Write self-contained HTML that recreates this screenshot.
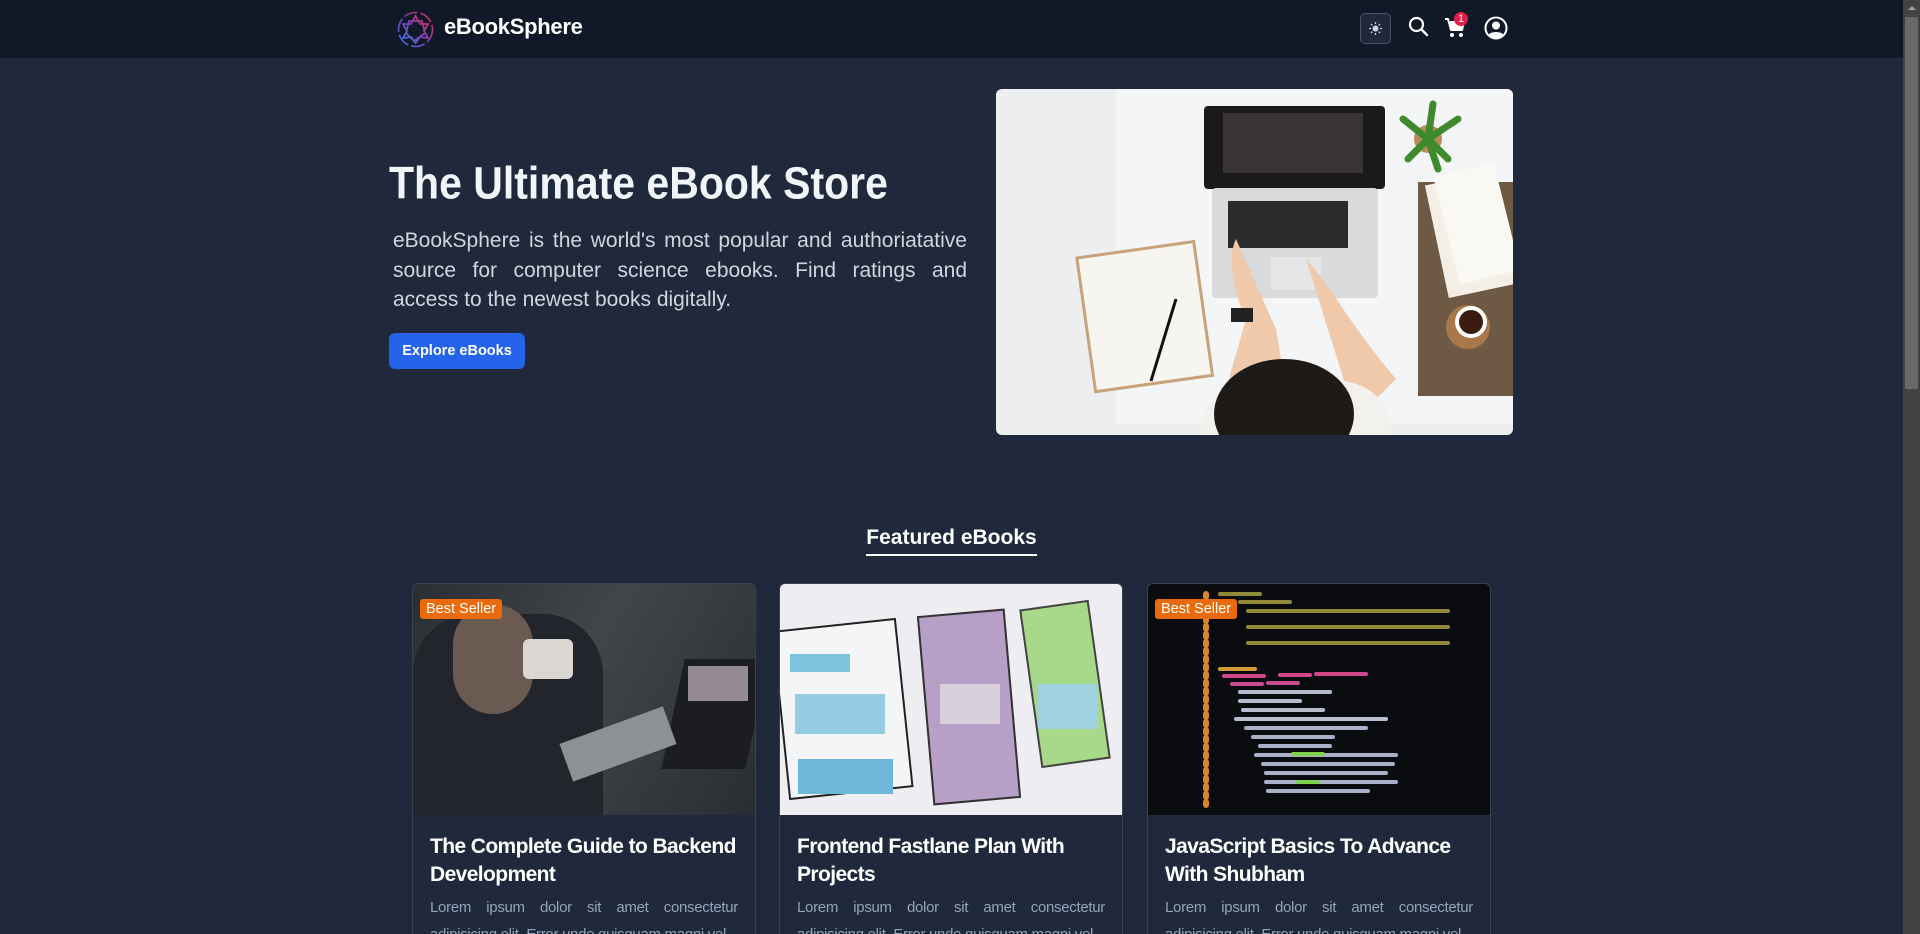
<!DOCTYPE html>
<html><head><meta charset="utf-8"><style>
*{margin:0;padding:0;box-sizing:border-box}
html,body{width:1920px;height:934px;overflow:hidden;background:#1f293b;font-family:"Liberation Sans",Arial,sans-serif;color:#f3f4f6}
.nav{position:absolute;left:0;top:0;width:1903px;height:58px;background:#111827}
.sb{position:absolute;left:1903px;top:0;width:17px;height:934px;background:#424242}
.sb div{position:absolute;left:2px;top:17px;width:13px;height:372px;background:#686868}
.sb i{position:absolute;left:5px;top:6px;border-left:4px solid transparent;border-right:4px solid transparent;border-bottom:4px solid #a0a0a0}
.abs{position:absolute}
h1{position:absolute;left:389px;top:158px;font-size:41px;font-weight:bold;color:#f1f5f9;white-space:nowrap;transform:scaleY(1.1);transform-origin:left top}
.lead{position:absolute;left:393px;top:226px;width:574px;font-size:21px;line-height:29.5px;color:#d1d5db}
.lead div{text-align:justify;text-align-last:justify;white-space:nowrap}
.lead div.last{text-align-last:left}
.btn{position:absolute;left:389px;top:333px;width:136px;height:36px;border-radius:6px;background:#2563eb;color:#fff;font-size:14.5px;font-weight:bold;text-align:center;line-height:36px}
.feat{position:absolute;left:0;width:1903px;top:526px;text-align:center;font-size:21px;font-weight:bold;color:#fff}
.feat span{display:inline-block;border-bottom:2px solid #fff;padding-bottom:4px}
.card{position:absolute;top:583px;width:344px;height:351px;border:1px solid #374151;border-bottom:none;border-radius:6px 6px 0 0;overflow:hidden;background:#1f293b}
.card .img{height:231px;position:relative;overflow:hidden}
.card h3{margin:18px 17px 0;font-size:21px;line-height:28px;color:#fff;letter-spacing:-0.6px}
.card p{margin:5px 17px 0;font-size:15px;line-height:27px;color:#94a3b8;text-align:justify;letter-spacing:-0.3px}
.badge{position:absolute;left:7px;top:15px;background:#ea6a0c;color:#fff;font-size:14.5px;padding:2px 6px;border-radius:3px}
</style></head><body>
<div class="nav">
  <svg class="abs" style="left:397px;top:11px" width="37" height="37" viewBox="0 0 37 37">
    <defs><linearGradient id="lg" x1="0" y1="1" x2="1" y2="0"><stop offset="0" stop-color="#2f7fe0"/><stop offset="0.5" stop-color="#7a3fb0"/><stop offset="1" stop-color="#e0305a"/></linearGradient></defs>
    <circle cx="18.5" cy="18.5" r="17" fill="none" stroke="url(#lg)" stroke-width="1.6" stroke-dasharray="14 3"/>
    <path d="M18.5 5 L23 13 L31 13 L27 20 L31 27 L23 26 L18.5 32 L14 26 L6 27 L10 20 L6 13 L14 13 Z M12 10 L25 10 L28 22 L17 30 L9 22 Z" fill="none" stroke="url(#lg)" stroke-width="1.8"/>
  </svg>
  <div class="abs" style="left:444px;top:14px;font-size:22px;font-weight:bold;color:#fff;letter-spacing:-0.3px">eBookSphere</div>
  <div class="abs" style="left:1360px;top:13px;width:31px;height:31px;border:1px solid #475569;border-radius:5px;background:#1f2937"></div>
  <svg class="abs" style="left:1369px;top:22px" width="13" height="13" viewBox="0 0 13 13"><circle cx="6.5" cy="6.5" r="3" fill="#cbd5e1"/><g stroke="#cbd5e1" stroke-width="1.2"><path d="M6.5 0v2M6.5 11v2M0 6.5h2M11 6.5h2M2 2l1.4 1.4M9.6 9.6L11 11M2 11l1.4-1.4M9.6 3.4L11 2"/></g></svg>
  <svg class="abs" style="left:1408px;top:16px" width="21" height="21" viewBox="0 0 21 21"><circle cx="8.5" cy="8.5" r="6.5" fill="none" stroke="#fff" stroke-width="2.2"/><path d="M13.5 13.5L19 19" stroke="#fff" stroke-width="2.4" stroke-linecap="round"/></svg>
  <svg class="abs" style="left:1444px;top:17px" width="22" height="22" viewBox="0 0 22 22"><path d="M1 2h3l3 11h11l2-8H6" fill="#fff" stroke="#fff" stroke-width="2" stroke-linejoin="round"/><rect x="6" y="5" width="13" height="8" fill="#fff"/><circle cx="8" cy="18" r="2" fill="#fff"/><circle cx="17" cy="18" r="2" fill="#fff"/></svg>
  <div class="abs" style="left:1454px;top:12px;width:14px;height:14px;border-radius:7px;background:#e11d48;color:#fff;font-size:11px;text-align:center;line-height:14px">1</div>
  <svg class="abs" style="left:1484px;top:16px" width="24" height="24" viewBox="0 0 24 24"><circle cx="12" cy="12" r="10.5" fill="none" stroke="#fff" stroke-width="2"/><circle cx="12" cy="9.5" r="4" fill="#fff"/><path d="M4.5 19c2-4 13-4 15 0c-2 2.5-5 3.5-7.5 3.5s-5.5-1-7.5-3.5z" fill="#fff"/></svg>
</div>
<div class="sb"><i></i><div></div></div>

<h1>The Ultimate eBook Store</h1>
<div class="lead"><div>eBookSphere is the world's most popular and authoriatative</div><div>source for computer science ebooks. Find ratings and</div><div class="last">access to the newest books digitally.</div></div>
<div class="btn">Explore eBooks</div>

<svg class="abs" style="left:996px;top:89px;border-radius:6px" width="517" height="346" viewBox="0 0 517 346">
  <rect width="517" height="346" fill="#eceef0"/>
  <rect x="120" y="0" width="400" height="335" fill="#f4f5f6"/>
  <rect x="422" y="93" width="95" height="214" fill="#6e5a44"/>
  <rect x="440" y="88" width="70" height="115" fill="#f3efe6" transform="rotate(-12 475 145)"/>
  <rect x="450" y="80" width="62" height="110" fill="#faf8f2" transform="rotate(-14 480 135)"/>
  <circle cx="472" cy="238" r="22" fill="#a8784a"/><circle cx="475" cy="233" r="16" fill="#fff"/><circle cx="475" cy="233" r="12" fill="#3a1d10"/>
  <circle cx="432" cy="50" r="14" fill="#b88a5c"/>
  <path d="M432 50l-25-20M432 50l5-35M432 50l30-20M432 50l20 20M432 50l-20 20M432 50l10 30" stroke="#3f8a2c" stroke-width="7" stroke-linecap="round"/>
  <rect x="208" y="17" width="181" height="83" rx="4" fill="#1a1a1a"/>
  <rect x="227" y="24" width="140" height="60" fill="#3a3436"/>
  <rect x="216" y="99" width="166" height="110" rx="4" fill="#d9dadc"/>
  <rect x="232" y="112" width="120" height="47" fill="#2b2b2b"/>
  <rect x="275" y="168" width="50" height="33" fill="#e6e6e8"/>
  <g transform="rotate(-8 150 230)"><rect x="90" y="160" width="118" height="135" fill="#f7f5f0" stroke="#c9a27a" stroke-width="3"/></g>
  <path d="M155 292l25-82" stroke="#111" stroke-width="3"/>
  <path d="M240 150c-10 20 0 60 10 80l-20 70h60l-10-60" fill="#f0c9ab"/>
  <path d="M310 170c20 20 40 60 90 120l-40 40z" fill="#f0c9ab"/>
  <rect x="235" y="219" width="22" height="14" fill="#222"/>
  <path d="M205 346c0-40 30-55 60-55h70c30 0 60 15 60 55z" fill="#f3f1ee"/>
  <ellipse cx="288" cy="325" rx="70" ry="55" fill="#1e1a18"/>
</svg>

<div class="feat"><span>Featured eBooks</span></div>

<div class="card" style="left:412px">
  <div class="img" style="background:linear-gradient(120deg,#2b2e33 0%,#41464b 45%,#2a2d31 100%)">
    <div class="abs" style="left:0;top:30px;width:190px;height:201px;background:#22262c;border-radius:60px 60px 0 0"></div>
    <div class="abs" style="left:40px;top:20px;width:80px;height:110px;background:#6a5a52;border-radius:40px"></div>
    <div class="abs" style="left:110px;top:55px;width:50px;height:40px;background:#dad6d2;border-radius:6px"></div>
    <div class="abs" style="left:260px;top:75px;width:84px;height:110px;background:#1c1d20;transform:skewX(-12deg)"></div>
    <div class="abs" style="left:275px;top:82px;width:60px;height:35px;background:#c9bcc4;opacity:.7"></div>
    <div class="abs" style="left:150px;top:140px;width:110px;height:40px;background:#8d9196;transform:rotate(-20deg)"></div>
    <div class="badge">Best Seller</div>
  </div>
  <h3>The Complete Guide to Backend Development</h3>
  <p>Lorem ipsum dolor sit amet consectetur adipisicing elit. Error unde quisquam magni vel</p>
</div>

<div class="card" style="left:779px">
  <div class="img" style="background:#eeeef2">
    <div class="abs" style="left:0;top:40px;width:125px;height:170px;border:2px solid #222;background:#f4f5f6;transform:rotate(-6deg)"></div>
    <div class="abs" style="left:10px;top:70px;width:60px;height:18px;background:#7cc3dc"></div>
    <div class="abs" style="left:15px;top:110px;width:90px;height:40px;background:#7cc3dc;opacity:.8"></div>
    <div class="abs" style="left:18px;top:175px;width:95px;height:35px;background:#6db8d8"></div>
    <div class="abs" style="left:145px;top:28px;width:88px;height:190px;background:#b79fc6;border:2px solid #333;transform:rotate(-5deg)"></div>
    <div class="abs" style="left:160px;top:100px;width:60px;height:40px;background:#d8d0da"></div>
    <div class="abs" style="left:250px;top:20px;width:70px;height:160px;background:#a8d88a;border:2px solid #444;transform:rotate(-8deg)"></div>
    <div class="abs" style="left:258px;top:100px;width:60px;height:45px;background:#9fd2e0"></div>
  </div>
  <h3>Frontend Fastlane Plan With Projects</h3>
  <p>Lorem ipsum dolor sit amet consectetur adipisicing elit. Error unde quisquam magni vel</p>
</div>

<div class="card" style="left:1147px">
  <div class="img" style="background:#0b0c10">
    <svg class="abs" style="left:0;top:0" width="344" height="231" viewBox="0 0 344 231">
      <g stroke-width="4" stroke-linecap="round">
        <path d="M72 10h40M92 18h50M100 27h200M100 43h200M100 59h200" stroke="#c8c04a" opacity=".7"/>
        <path d="M72 85h35" stroke="#d39b3a"/>
        <path d="M76 92h40M132 91h30M168 90h50" stroke="#d1468a"/>
        <path d="M84 100h30M120 99h30" stroke="#c94c90"/>
        <path d="M92 108h90M92 117h60M95 126h80M88 135h150" stroke="#b8bcd0"/>
        <path d="M98 144h120M105 153h80M112 162h70M108 171h140M115 180h130M118 189h120M118 198h130M120 207h100" stroke="#aab0c8"/>
        <path d="M145 170h30M150 198h20" stroke="#7fd04a"/>
        <path d="M58 10v215" stroke="#d9852a" stroke-width="6" stroke-dasharray="3 5"/>
      </g>
    </svg>
    <div class="badge">Best Seller</div>
  </div>
  <h3>JavaScript Basics To Advance With Shubham</h3>
  <p>Lorem ipsum dolor sit amet consectetur adipisicing elit. Error unde quisquam magni vel</p>
</div>
</body></html>
